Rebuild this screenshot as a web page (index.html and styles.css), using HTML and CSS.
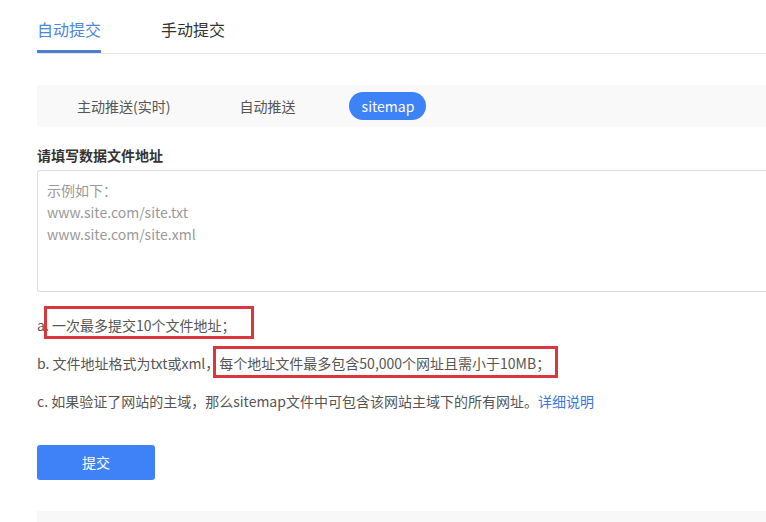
FILE: index.html
```html
<!DOCTYPE html>
<html lang="zh-CN">
<head>
<meta charset="utf-8">
<link rel="stylesheet" href="styles.css">
</head>
<body>
<div class="page">
  <div class="tabs">
    <div class="tab active">自动提交</div>
    <div class="tab">手动提交</div>
  </div>
  <div class="subtabs">
    <div class="subtab first">主动推送(实时)</div>
    <div class="subtab second">自动推送</div>
    <div class="subtab pill">sitemap</div>
  </div>
  <div class="label">请填写数据文件地址</div>
  <div class="textarea">
    <div class="ph">示例如下：</div>
    <div class="ph">www.site.com/site.txt</div>
    <div class="ph">www.site.com/site.xml</div>
  </div>
  <div class="rules">
    <div class="rule">a. <span class="hl hl-a">一次最多提交10个文件地址；</span></div>
    <div class="rule">b. 文件地址格式为txt或xml，<span class="hl hl-b">每个地址文件最多包含50,000个网址且需小于10MB；</span></div>
    <div class="rule">c. 如果验证了网站的主域，那么sitemap文件中可包含该网站主域下的所有网址。<a class="link">详细说明</a></div>
  </div>
  <div class="btn">提交</div>
  <div class="footer-box"></div>
</div>
</body>
</html>
```
FILE: styles.css
```css
html, body {
  margin: 0;
  padding: 0;
  overflow: hidden;
  background: #fff;
}
body {
  font-family: "Noto Sans CJK SC", "Liberation Sans", sans-serif;
  color: #555;
  width: 766px;
  height: 522px;
}
.page {
  padding-left: 37px;
}
.tabs {
  display: flex;
  border-bottom: 1px solid #e8e8e8;
  height: 54px;
  box-sizing: border-box;
}
.tab {
  font-size: 16px;
  line-height: 24px;
  padding-top: 17px;
  height: 53px;
  box-sizing: border-box;
  color: #333;
  margin-right: 60px;
}
.tab.active {
  color: #4a86d9;
  border-bottom: 3px solid #4a7fd4;
}
.subtabs {
  margin-top: 31px;
  height: 42px;
  background: #f9f9f9;
  display: flex;
  align-items: center;
}
.subtab {
  font-size: 14px;
  line-height: 20px;
  color: #555;
}
.subtab.first { margin-left: 40px; }
.subtab.second { margin-left: 69px; }
.subtab.pill {
  margin-left: 54px;
  background: #3e82f7;
  color: #fff;
  height: 28px;
  line-height: 28px;
  border-radius: 14px;
  padding: 0 11px;
  width: 55px;
  text-align: center;
}
.label {
  margin-top: 18px;
  font-size: 14px;
  font-weight: bold;
  color: #333;
  line-height: 20px;
}
.textarea {
  margin-top: 5px;
  height: 122px;
  box-sizing: border-box;
  border: 1px solid #dcdcdc;
  border-right: none;
  border-radius: 3px 0 0 3px;
  padding: 8px 9px;
}
.ph {
  font-size: 14px;
  line-height: 22px;
  color: #999;
}
.rules {
  margin-top: 22px;
}
.rule {
  font-size: 14px;
  line-height: 22px;
  color: #555;
  margin-bottom: 16px;
}
.hl {
  position: relative;
  display: inline-block;
  line-height: 22px;
}
.hl::after {
  content: "";
  position: absolute;
  border: 3px solid #d9363e;
  pointer-events: none;
}
.hl-a::after {
  left: -8px;
  right: -19px;
  top: -8px;
  bottom: -3px;
}
.hl-b::after {
  left: -6px;
  right: -8px;
  top: -6px;
  bottom: -4px;
}
.link {
  color: #3b76d8;
}
.btn {
  margin-top: 33px;
  width: 118px;
  height: 35px;
  line-height: 35px;
  background: #3f82f7;
  color: #fff;
  border-radius: 3px;
  text-align: center;
  font-size: 14px;
}
.footer-box {
  margin-top: 31px;
  height: 11px;
  background: #f8f8f8;
}
```
